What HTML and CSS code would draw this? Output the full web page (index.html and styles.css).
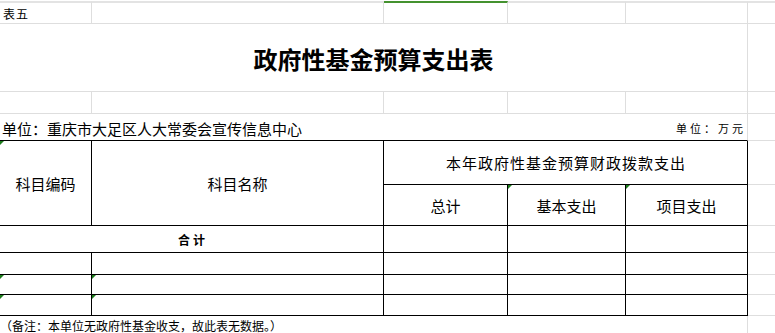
FILE: index.html
```html
<!DOCTYPE html>
<html lang="zh">
<head>
<meta charset="utf-8">
<title>政府性基金预算支出表</title>
<link rel="stylesheet" href="styles.css">
</head>
<body>
<div class="sheet">
  <!-- row 1 -->
  <div class="c g top small">表五</div>
  <div class="c g top"></div>
  <div class="c g top sel"></div>
  <div class="c g top"></div>
  <div class="c g top"></div>
  <div class="c gb top"></div>

  <!-- row 2 title -->
  <div class="c g span5 title">政府性基金预算支出表</div>
  <div class="c gb"></div>

  <!-- row 3 -->
  <div class="c g"></div>
  <div class="c g"></div>
  <div class="c g"></div>
  <div class="c g"></div>
  <div class="c g"></div>
  <div class="c gb"></div>

  <!-- row 4 unit -->
  <div class="c span5 unit">
    <span class="unit-name">单位：重庆市大足区人大常委会宣传信息中心</span>
    <span class="unit-money">单位：万元</span>
  </div>
  <div class="c gb"></div>

  <!-- row 5-6 header -->
  <div class="c b rows2 head tri">科目编码</div>
  <div class="c b rows2 head">科目名称</div>
  <div class="c b span3 head wide">本年政府性基金预算财政拨款支出</div>
  <div class="c gb"></div>

  <div class="c b head">总计</div>
  <div class="c b head tri">基本支出</div>
  <div class="c b head tri">项目支出</div>
  <div class="c gb"></div>

  <!-- row 7 total -->
  <div class="c b span2 total">合计</div>
  <div class="c b"></div>
  <div class="c b"></div>
  <div class="c b"></div>
  <div class="c gb"></div>

  <!-- rows 8-10 -->
  <div class="c b"></div>
  <div class="c b"></div>
  <div class="c b"></div>
  <div class="c b"></div>
  <div class="c b"></div>
  <div class="c gb"></div>

  <div class="c b tri"></div>
  <div class="c b tri"></div>
  <div class="c b"></div>
  <div class="c b"></div>
  <div class="c b"></div>
  <div class="c gb"></div>

  <div class="c b tri"></div>
  <div class="c b tri"></div>
  <div class="c b"></div>
  <div class="c b"></div>
  <div class="c b"></div>
  <div class="c gb"></div>

  <!-- row 11 note -->
  <div class="c span5 note">（备注：本单位无政府性基金收支，故此表无数据。）</div>
  <div class="c"></div>
</div>
</body>
</html>
```

FILE: styles.css
```css
html, body {
  margin: 0;
  padding: 0;
  background: #ffffff;
  overflow: hidden;
}

body {
  font-family: "Noto Sans CJK SC", "Noto Sans", sans-serif;
  color: #000000;
}

.sheet {
  width: 775px;
  margin-top: 1px;
  display: grid;
  grid-template-columns: 92px 292px 124px 118px 122px 27px;
  grid-template-rows: 23px 68px 22px 27px 44px 41px 27px 22px 20px 21px 17px;
}

.c {
  box-sizing: border-box;
  position: relative;
  display: flex;
  align-items: center;
  justify-content: center;
  min-width: 0;
  white-space: nowrap;
}

.g {
  border-right: 1px solid #dedede;
  border-bottom: 1px solid #dedede;
}

.gb {
  border-bottom: 1px solid #dedede;
}

.b {
  border-right: 1px solid #000000;
  border-bottom: 1px solid #000000;
}

.top {
  border-top: 2px solid #e3e3e3;
}

.sel {
  border-top-color: #44922f;
}

.span5 {
  grid-column: span 5;
}

.span3 {
  grid-column: span 3;
}

.span2 {
  grid-column: span 2;
}

.rows2 {
  grid-row: span 2;
}

.small {
  justify-content: flex-start;
  padding-left: 3px;
  font-size: 12px;
  letter-spacing: 1px;
}

.title {
  font-size: 24px;
  font-weight: 700;
  font-family: "Noto Sans CJK SC", serif;
  padding-top: 1px;
}

.unit {
  justify-content: space-between;
  border-right: 1px solid #dedede;
  border-bottom: 1px solid #000000;
  padding: 2px 1px 0 2px;
}

.unit-name {
  font-size: 15px;
}

.unit-money {
  font-size: 11px;
  letter-spacing: 3px;
}

.head {
  font-size: 15px;
}

.wide {
  letter-spacing: 1px;
  padding-left: 1px;
}

.total {
  font-size: 12px;
  font-weight: 700;
  letter-spacing: 3px;
  padding-left: 3px;
}

.note {
  justify-content: flex-start;
  align-items: flex-end;
  border-right: 1px solid #dedede;
  font-size: 12px;
  line-height: 14px;
}

.tri::before {
  content: "";
  position: absolute;
  left: 0;
  top: 0;
  width: 0;
  height: 0;
  border-top: 4px solid #1d7d1d;
  border-right: 4px solid transparent;
}
```
